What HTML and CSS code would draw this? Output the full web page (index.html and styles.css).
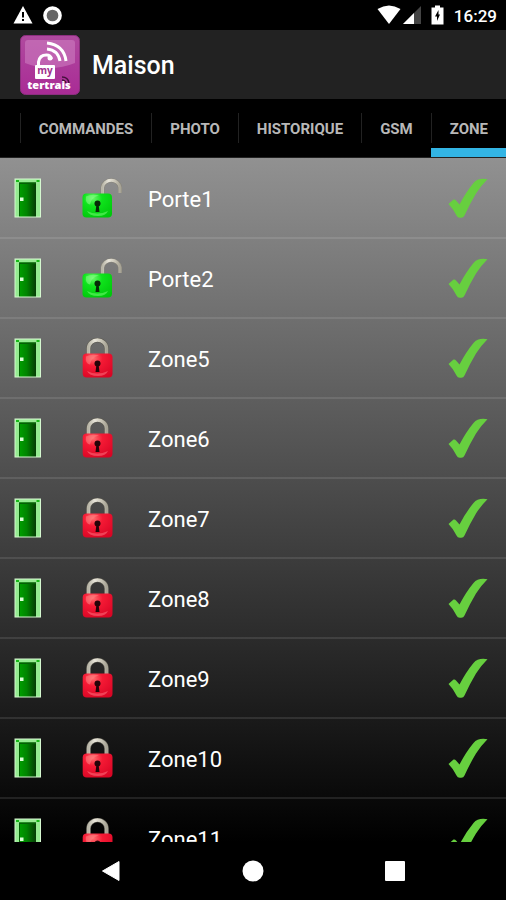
FILE: index.html
```
<!DOCTYPE html>
<html lang="fr">
<head>
  <meta charset="UTF-8">
  <meta name="viewport" content="width=device-width, initial-scale=1">
  <title>My Tertrais - Maison</title>
  <link rel="stylesheet" href="styles.css">
</head>
<body>

<!-- Shared icons -->
<svg class="sprite" width="0" height="0" aria-hidden="true">
  <defs>
    <linearGradient id="doorFill" x1="0" x2="1">
      <stop offset="0" stop-color="#00a000"/>
      <stop offset="0.45" stop-color="#008500"/>
      <stop offset="1" stop-color="#063d06"/>
    </linearGradient>
    <linearGradient id="shackle" x1="0" x2="1">
      <stop offset="0" stop-color="#b9b6a8"/>
      <stop offset="0.35" stop-color="#e8e5da"/>
      <stop offset="0.7" stop-color="#cac6b8"/>
      <stop offset="1" stop-color="#a8a496"/>
    </linearGradient>
    <radialGradient id="redFill" cx="0.35" cy="0.2" r="0.9">
      <stop offset="0" stop-color="#ff7070"/>
      <stop offset="0.35" stop-color="#f51a35"/>
      <stop offset="1" stop-color="#d80524"/>
    </radialGradient>
    <radialGradient id="greenFill" cx="0.35" cy="0.2" r="0.9">
      <stop offset="0" stop-color="#6cf86c"/>
      <stop offset="0.35" stop-color="#0fe31c"/>
      <stop offset="1" stop-color="#00c60b"/>
    </radialGradient>
    <linearGradient id="logoFill" x1="0" y1="0" x2="0" y2="1">
      <stop offset="0" stop-color="#b04a9f"/>
      <stop offset="1" stop-color="#a92b95"/>
    </linearGradient>
  </defs>
  <symbol id="door" viewBox="0 0 28 40">
    <rect x="0.5" y="0.5" width="26.500" height="39" fill="#d5f8d0"/>
    <path d="M1.500 38.500V1.500h24.500v37h-4V5H5v33.500z" fill="#96ec92"/>
    <path d="M2 2h3v2H2zM22.500 2h3v2h-3z" fill="#18b818"/>
    <rect x="5" y="4.500" width="17" height="34" fill="url(#doorFill)"/>
    <path d="M5 4.500h17v1.500H6v32H5z" fill="#056005"/>
    <rect x="6" y="19.500" width="3.500" height="3.500" fill="#dcffd8"/>
  </symbol>
  <symbol id="locked" viewBox="0 0 40 40">
    <path d="M6.500 18V10.500a9 8.500 0 0 1 18 0V18" fill="none" stroke="#5b5950" stroke-width="4.500"/>
    <path d="M6.500 18V10.500a9 8.500 0 0 1 18 0V18" fill="none" stroke="url(#shackle)" stroke-width="3.500"/>
    <rect x="0.700" y="15.500" width="29.800" height="24" rx="4" fill="url(#redFill)"/>
    <path d="M4 18.500q6-3 13-1-8 2-9 9-5-1-4-8z" fill="#ff8585" opacity="0.5"/>
    <path d="M5 33q10 5 21 0-2 5-10 5-9 0-11-5z" fill="#ff7a86" opacity="0.5"/>
    <circle cx="15.500" cy="25.500" r="3" fill="#250308"/>
    <path d="M14.500 26h2l1 8h-4z" fill="#250308"/>
  </symbol>
  <symbol id="unlocked" viewBox="0 0 40 40">
    <path d="M20.500 16.500V9.500a8.800 8 0 0 1 17.500 0V15" fill="none" stroke="#88857a" stroke-width="4"/>
    <path d="M20.500 16.500V9.500a8.800 8 0 0 1 17.500 0V15" fill="none" stroke="url(#shackle)" stroke-width="3"/>
    <rect x="0.500" y="15.500" width="29.500" height="24" rx="4" fill="url(#greenFill)"/>
    <path d="M4 18.500q6-3 13-1-8 2-9 9-5-1-4-8z" fill="#8bff8b" opacity="0.5"/>
    <path d="M5 33q10 5 21 0-2 5-10 5-9 0-11-5z" fill="#7dff7d" opacity="0.5"/>
    <circle cx="15.500" cy="25.500" r="3" fill="#062a06"/>
    <path d="M14.500 26h2l1 8h-4z" fill="#062a06"/>
  </symbol>
  <symbol id="check" viewBox="0 0 40 40">
    <path d="M0.500 26 5.500 21.500Q7 21 8 22.500L11.500 26.500Q18 14 25.500 5 30-0.500 39.500 1.200 33 7.500 28 15.500 22 25.500 16.500 37.500 15.500 40 12.500 39.700 9.500 40 8.500 37.500 5.500 31 0.500 26z" fill="#67cf3f"/>
  </symbol>
</svg>

<div class="app">

  <div class="status-bar">
    <svg width="20" height="18" viewBox="0 0 20 18" aria-hidden="true">
      <path d="M10 0 19.500 17.500H0.500z" fill="#fff"/>
      <path d="M9 6h2v5.500H9zM9 13h2v2H9z" fill="#000"/>
    </svg>
    <svg width="19" height="19" viewBox="0 0 19 19" aria-hidden="true">
      <circle cx="9.500" cy="9.500" r="7.600" fill="#666" stroke="#fff" stroke-width="3.500"/>
    </svg>
    <span class="spacer"></span>
    <svg width="24" height="20" viewBox="0 0 24 20" aria-hidden="true">
      <path d="M0.500 4Q12-3 23.500 4L12 19z" fill="#fff"/>
    </svg>
    <svg class="signal" width="18" height="20" viewBox="0 0 18 20" aria-hidden="true">
      <path d="M18 1V19H0z" fill="#444"/>
      <path d="M11 8V19H0z" fill="#fff"/>
    </svg>
    <svg width="13" height="20" viewBox="0 0 13 20" aria-hidden="true">
      <path d="M4 0.500h5v2h3.500v17H0.500v-17H4z" fill="#fff"/>
      <path d="M7.500 5 4 11.500H6V16L9 9.500H7.500z" fill="#000"/>
    </svg>
    <time>16:29</time>
  </div>

  <header class="action-bar">
    <svg class="logo" width="60" height="60" viewBox="0 0 60 60" role="img" aria-label="my tertrais">
      <rect x="0.500" y="0.500" width="59" height="59" rx="5" fill="url(#logoFill)" stroke="#8c2f7f"/>
      <path d="M5 8q0-3 3-3h44q3 0 3 3v20Q30 38 5 28z" fill="#cf82c2" opacity="0.55"/>
      <path d="M27 8q17 2 19 18M27 14q11 1 13 12" fill="none" stroke="#fff" stroke-width="3"/>
      <path d="M18.500 31v-4q1-7 8-7 4 0 5 4" fill="none" stroke="#fff" stroke-width="3"/>
      <circle cx="30" cy="23" r="2.500" fill="#fff"/>
      <rect x="15" y="30" width="20" height="14" rx="1" fill="#fff"/>
      <text class="logo-my" x="25" y="39" text-anchor="middle">my</text>
      <path d="M42 42q6 0 7 6M42 45q3 0 4 3" fill="none" stroke="#42103a" stroke-width="1.500"/>
      <text class="logo-name" x="29" y="54" text-anchor="middle">tertrais</text>
    </svg>
    <h1>Maison</h1>
  </header>

  <nav class="tabs">
    <a href="#commandes">COMMANDES</a>
    <a href="#photo">PHOTO</a>
    <a href="#historique">HISTORIQUE</a>
    <a href="#gsm">GSM</a>
    <a href="#zone" class="active" aria-current="page">ZONE</a>
  </nav>

  <main class="zones">
    <ul id="zoneList"></ul>
  </main>

  <div class="nav-bar">
    <button type="button" aria-label="Retour">
      <svg width="20" height="22" viewBox="0 0 20 22"><path d="M18 1.500V20.500L1.500 11z" fill="#fff" stroke="#fff" stroke-linejoin="round"/></svg>
    </button>
    <button type="button" aria-label="Accueil">
      <svg width="22" height="22" viewBox="0 0 22 22"><circle cx="11" cy="11" r="10.500" fill="#fff"/></svg>
    </button>
    <button type="button" aria-label="Applications">
      <svg width="20" height="20" viewBox="0 0 20 20"><rect width="20" height="20" rx="1" fill="#fff"/></svg>
    </button>
  </div>

</div>

<script src="zones.js"></script>
</body>
</html>
```
FILE: styles.css
```
* {
  box-sizing: border-box;
}

body {
  margin: 0;
  background-color: #000;
  color: #fff;
  font-family: Roboto, "Noto Sans", sans-serif;
}

.sprite {
  position: absolute;
}

.app {
  display: flex;
  flex-direction: column;
  height: 100vh;
}

/* Status bar */
.status-bar {
  display: flex;
  align-items: center;
  height: 30px;
  padding: 0 9px 0 13px;
  gap: 10px;
  font-size: 17px;
  font-weight: 500;
}

.spacer {
  flex: 1;
}

.status-bar .signal {
  margin-left: -8px;
}

.status-bar time {
  line-height: 20px;
  padding-top: 2px;
}

/* Title bar */
.action-bar {
  display: flex;
  align-items: center;
  gap: 12px;
  height: 69px;
  padding: 0 20px;
  background-color: #222;
}

.action-bar h1 {
  margin: 0;
  padding-top: 2px;
  font-size: 25px;
  font-weight: 500;
}

.logo-my {
  fill: #a0308c;
  font-family: "Open Sans", sans-serif;
  font-size: 10px;
  font-weight: 700;
}

.logo-name {
  fill: #fff;
  font-family: "Open Sans", sans-serif;
  font-size: 11px;
  font-weight: 800;
}

/* Tabs */
.tabs {
  display: flex;
  justify-content: flex-end;
  flex-shrink: 0;
  height: 59px;
  border-bottom: 1px solid #222;
  overflow: hidden;
}

.tabs a {
  display: flex;
  align-items: center;
  padding: 2px 18px 0 19px;
  background: linear-gradient(#222, #222) left center / 1px 30px no-repeat;
  color: #b8b8b8;
  font-size: 15px;
  font-weight: 700;
  text-decoration: none;
}

.tabs .active {
  box-shadow: inset 0 -9px #33b5e5;
}

/* Zone list */
.zones {
  flex: 1;
  min-height: 0;
  overflow: hidden;
  background: linear-gradient(#919191, #000);
}

.zones ul {
  margin: 0;
  padding: 1px 0 0;
  list-style: none;
}

.zones li {
  display: flex;
  align-items: center;
  height: 80px;
  padding: 0 18px 0 14px;
  border-bottom: 2px solid rgba(255, 255, 255, 0.1);
  font-size: 22px;
}

.zones .lock {
  margin: 0 26px 0 40px;
}

.zones .name {
  flex: 1;
  padding-top: 2px;
}

/* Navigation bar */
.nav-bar {
  display: flex;
  justify-content: center;
  height: 58px;
  flex-shrink: 0;
}

.nav-bar button {
  display: flex;
  align-items: center;
  justify-content: center;
  width: 28%;
  padding: 0;
  border: none;
  background: none;
}
```
FILE: zones.js
```
const zones = [
  { name: "Porte1", lock: "unlocked" },
  { name: "Porte2", lock: "unlocked" },
  { name: "Zone5", lock: "locked" },
  { name: "Zone6", lock: "locked" },
  { name: "Zone7", lock: "locked" },
  { name: "Zone8", lock: "locked" },
  { name: "Zone9", lock: "locked" },
  { name: "Zone10", lock: "locked" },
  { name: "Zone11", lock: "locked" }
];

document.getElementById("zoneList").innerHTML = zones.map(zone => `
  <li>
    <svg width="28" height="40" aria-hidden="true"><use href="#door"/></svg>
    <svg class="lock" width="40" height="40" aria-hidden="true"><use href="#${zone.lock}"/></svg>
    <span class="name">${zone.name}</span>
    <svg width="40" height="40" aria-hidden="true"><use href="#check"/></svg>
  </li>`).join("");
```
